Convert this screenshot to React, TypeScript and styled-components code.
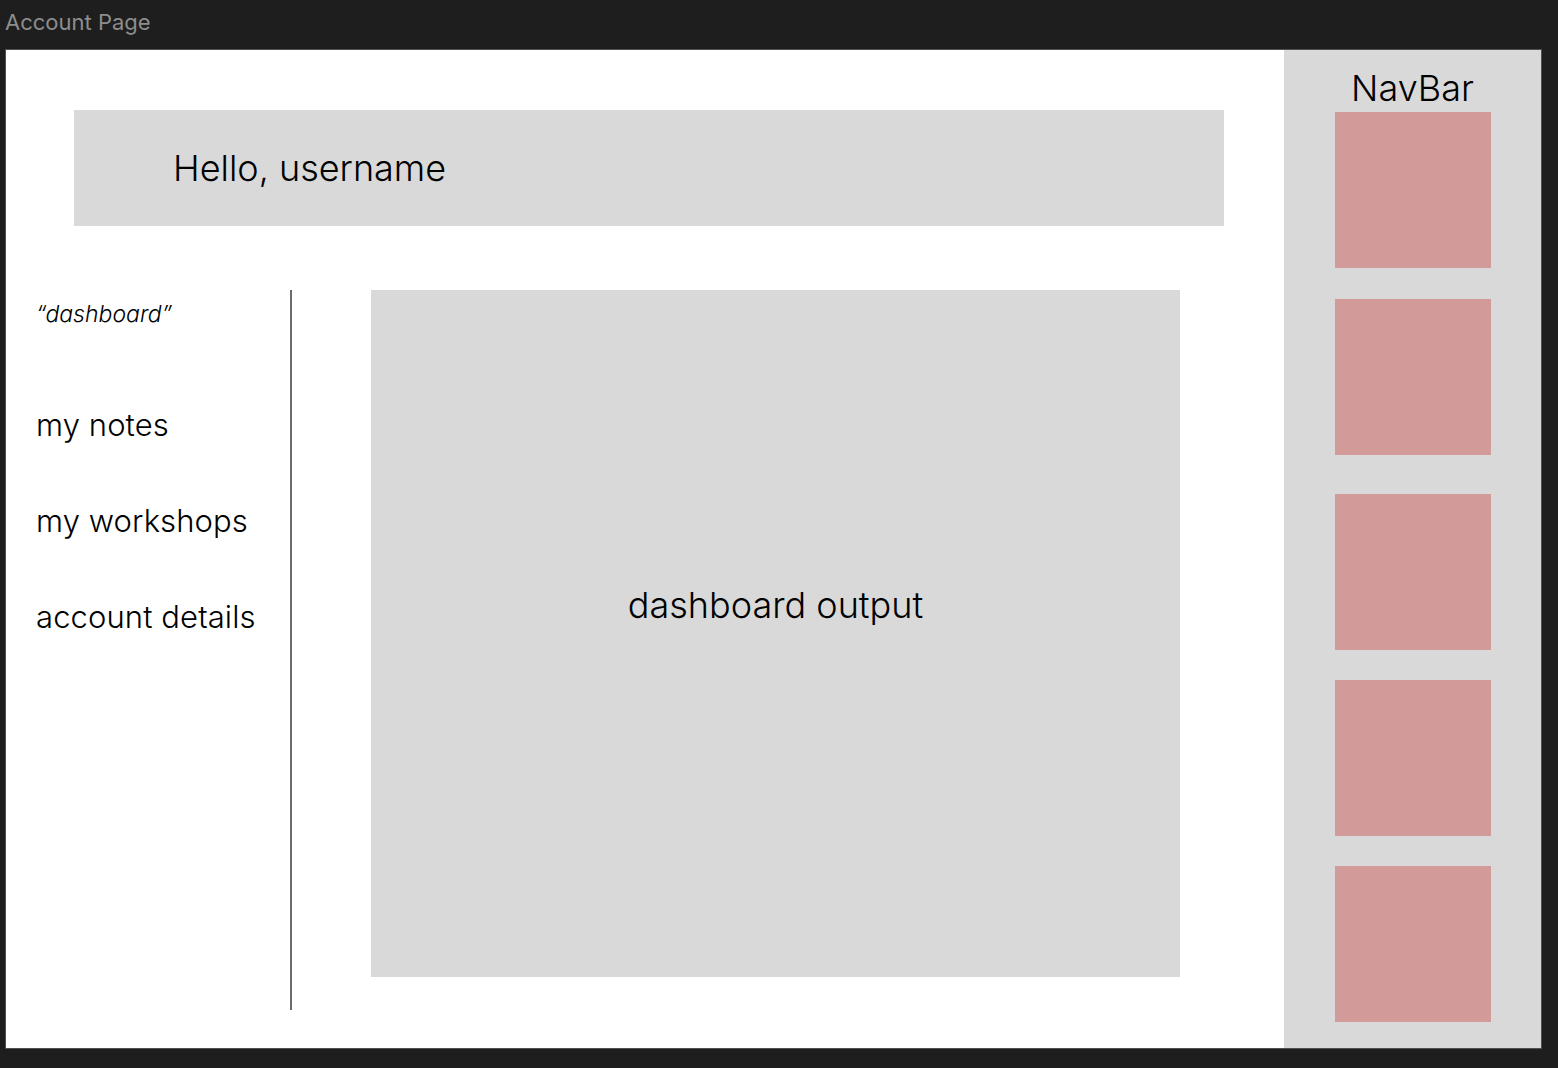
import styled, { createGlobalStyle } from "styled-components"

const GlobalStyle = createGlobalStyle`
  html, body {
    margin: 0;
    padding: 0;
    background: #1e1e1e;
  }
  body {
    font-family: Inter, "Noto Sans", sans-serif;
  }
`

const navOffsets = [2, 31, 39, 30, 30];

export default function App() {
  return (
    <>
      <GlobalStyle />
      <Screen>
        <FrameTitle>Account Page</FrameTitle>
        <Frame>
          <Main>
            <Greeting>
              <GreetingText>Hello, username</GreetingText>
            </Greeting>
            <Body>
              <Sidebar>
                <SectionLabel>“dashboard”</SectionLabel>
                <MenuList>
                  <MenuItem>my notes</MenuItem>
                  <MenuItem>my workshops</MenuItem>
                  <MenuItem>account details</MenuItem>
                </MenuList>
              </Sidebar>
              <Divider />
              <Output>dashboard output</Output>
            </Body>
          </Main>
          <NavBar>
            <NavTitle>NavBar</NavTitle>
            {navOffsets.map((offset, i) => (
              <NavTile key={i} $offset={offset} />
            ))}
          </NavBar>
        </Frame>
      </Screen>
    </>
  );
}

const Screen = styled.div`
  width: 1558px;
  height: 1068px;
  background: #1e1e1e;
  overflow: hidden;
`

const FrameTitle = styled.div`
  height: 44px;
  padding-left: 5px;
  font-size: 22px;
  line-height: 44px;
  color: #8d8d8d;
`

const Frame = styled.div`
  display: flex;
  margin: 5px 0 0 5px;
  width: 1537px;
  height: 1000px;
  box-sizing: border-box;
  border: 1px solid #505050;
  background: #ffffff;
`

const Main = styled.div`
  display: flex;
  flex-direction: column;
  width: 1278px;
`

const Greeting = styled.div`
  display: flex;
  align-items: center;
  margin: 60px 0 0 68px;
  width: 1150px;
  height: 116px;
  background: #d9d9d9;
`

const GreetingText = styled.span`
  margin-left: 99px;
  font-size: 36px;
  font-weight: 300;
  color: #000;
`

const Body = styled.div`
  display: flex;
  margin-top: 64px;
`

const Sidebar = styled.div`
  display: flex;
  flex-direction: column;
  width: 284px;
  padding-left: 30px;
  box-sizing: border-box;
`

const SectionLabel = styled.div`
  height: 48px;
  line-height: 48px;
  font-size: 23px;
  font-style: italic;
  font-weight: 300;
  color: #000;
`

const MenuList = styled.div`
  display: flex;
  flex-direction: column;
  margin-top: 39px;
`

const MenuItem = styled.div`
  height: 96px;
  line-height: 96px;
  font-size: 31px;
  font-weight: 300;
  letter-spacing: 0.1px;
  color: #000;
  white-space: nowrap;
`

const Divider = styled.div`
  width: 2px;
  height: 720px;
  background: #6a6a6a;
`

const Output = styled.div`
  display: flex;
  align-items: center;
  justify-content: center;
  margin-left: 79px;
  width: 809px;
  height: 687px;
  background: #d9d9d9;
  font-size: 36px;
  font-weight: 300;
  color: #000;
  padding-bottom: 58px;
  box-sizing: border-box;
`

const NavBar = styled.div`
  display: flex;
  flex-direction: column;
  align-items: center;
  width: 257px;
  padding-top: 16px;
  box-sizing: border-box;
  background: #d9d9d9;
`

const NavTitle = styled.div`
  height: 44px;
  line-height: 44px;
  font-size: 36px;
  font-weight: 300;
  color: #000;
`

const NavTile = styled.div<{ $offset: number }>`
  flex: none;
  width: 156px;
  height: 156px;
  margin-top: ${p => p.$offset}px;
  background: #d29b99;
`
